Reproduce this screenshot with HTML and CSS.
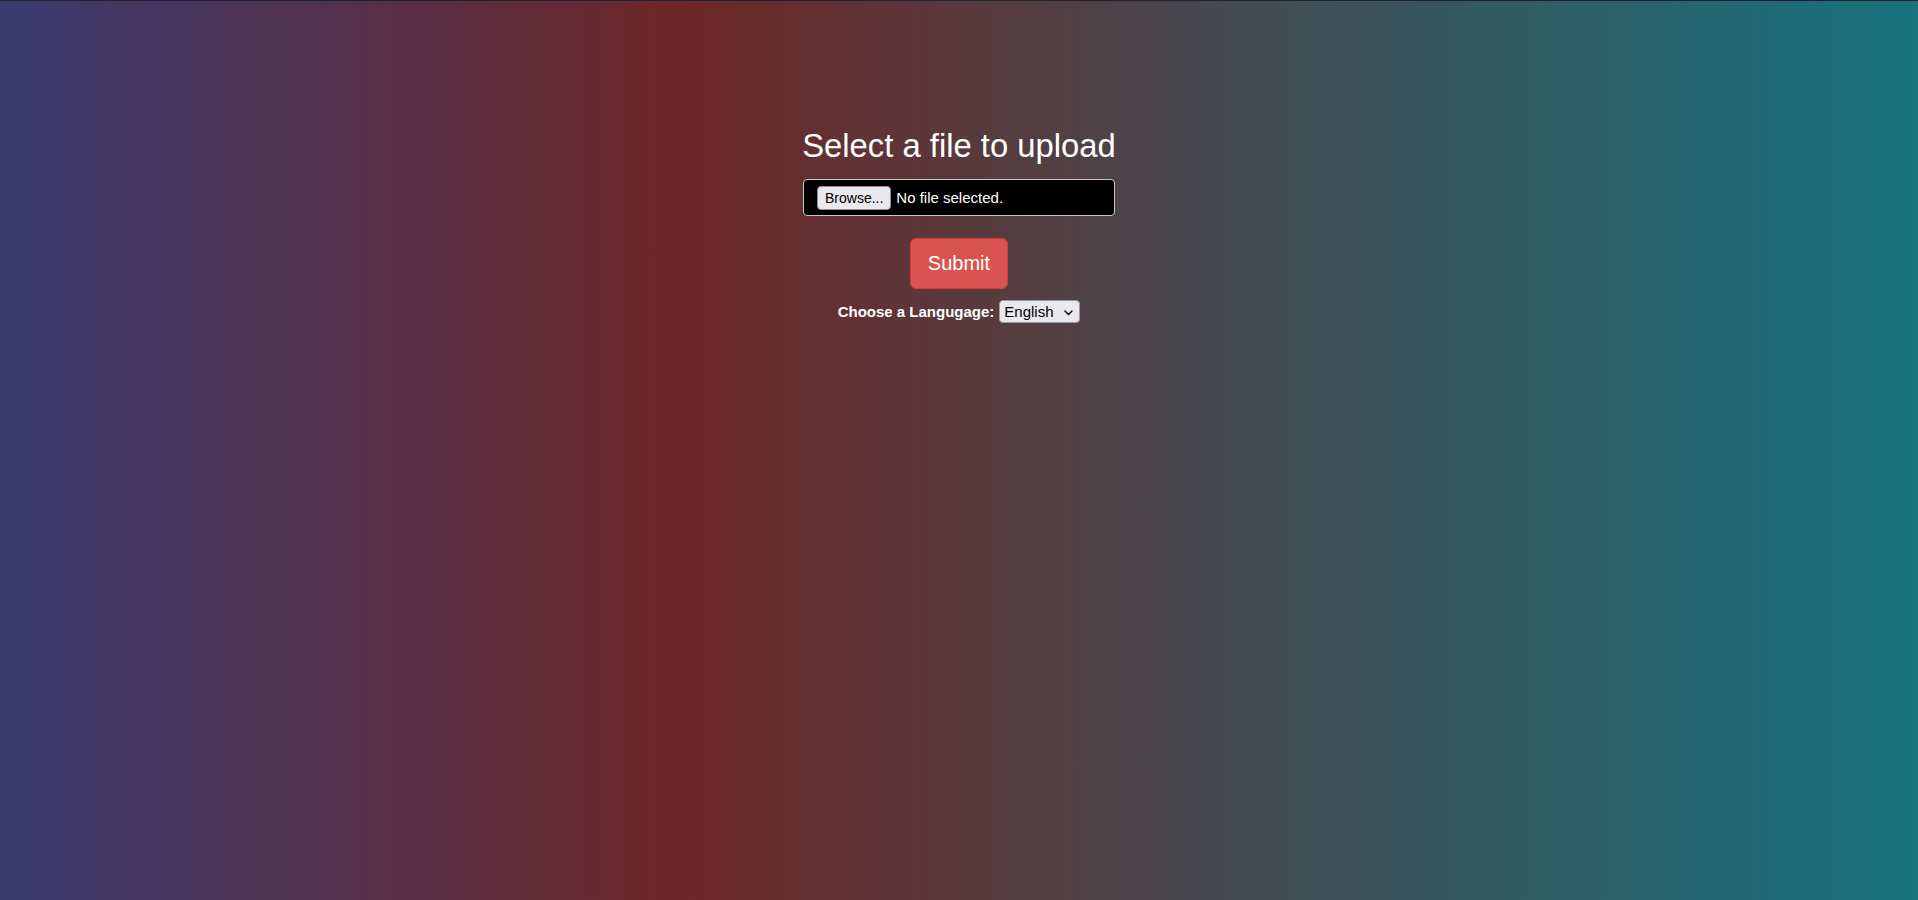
FILE: index.html
```html
<!DOCTYPE html>
<html lang="en">
<head>
<meta charset="utf-8">
<title>Upload</title>
<link rel="stylesheet" href="styles.css">
</head>
<body>
<div class="page">
  <form class="upload">
    <h1 class="title">Select a file to upload</h1>
    <div class="file-box">
      <button type="button" class="browse">Browse...</button>
      <span class="file-name">No file selected.</span>
    </div>
    <button type="submit" class="submit">Submit</button>
    <div class="lang-row">
      <label class="lang-label" for="lang">Choose a Langugage:</label>
      <span class="select-wrap">
        <select id="lang" class="lang-select">
          <option>English</option>
        </select>
        <svg class="chev" width="9" height="6" viewBox="0 0 9 6"><path d="M1 1l3.5 3.5L8 1" fill="none" stroke="#111" stroke-width="1.5" stroke-linecap="round" stroke-linejoin="round"/></svg>
      </span>
    </div>
  </form>
</div>
</body>
</html>
```

FILE: styles.css
```css
html, body {
  margin: 0;
  padding: 0;
  height: 100%;
}
body {
  font-family: "Liberation Sans", Arial, sans-serif;
  font-size: 15px;
  color: #fff;
}
.page {
  min-height: 900px;
  box-sizing: border-box;
  border-top: 1px solid #1d2130;
  background: linear-gradient(to right, #3b3b72 0%, #6e2727 35.5%, #3f4f56 68%, #17737f 100%);
  display: flex;
  justify-content: center;
}
.upload {
  display: flex;
  flex-direction: column;
  align-items: center;
  padding-top: 127px;
}
.title {
  margin: 0;
  font-size: 32.8px;
  font-weight: 400;
  line-height: 36px;
  color: #fff;
}
.file-box {
  margin-top: 15px;
  width: 312px;
  height: 37px;
  box-sizing: border-box;
  background: #000;
  border: 1px solid #c8c8c8;
  border-radius: 4px;
  padding: 0 13px;
  display: flex;
  align-items: center;
  gap: 5px;
}
.browse {
  font-family: "Liberation Sans", Arial, sans-serif;
  font-size: 14px;
  height: 24px;
  padding: 0 7px;
  background: #e9e9ed;
  color: #000;
  border: 1px solid #8f8f9d;
  border-radius: 4px;
  line-height: 22px;
}
.file-name {
  font-size: 15px;
  color: #fff;
}
.submit {
  margin-top: 22px;
  font-family: "Liberation Sans", Arial, sans-serif;
  font-size: 20px;
  line-height: 29px;
  padding: 10px 17px;
  background: #d9534f;
  color: #fff;
  border: 1px solid #c9403c;
  border-radius: 6px;
}
.lang-row {
  margin-top: 11px;
  display: flex;
  align-items: center;
  gap: 5px;
}
.lang-label {
  font-weight: 700;
  font-size: 15px;
}
.select-wrap {
  position: relative;
  display: inline-block;
}
.lang-select {
  appearance: none;
  -webkit-appearance: none;
  font-family: "Liberation Sans", Arial, sans-serif;
  font-size: 15px;
  height: 23px;
  width: 81px;
  box-sizing: border-box;
  padding: 0 20px 0 4px;
  background: #e9e9ed;
  color: #000;
  border: 1px solid #9a9aa6;
  border-radius: 4px;
}
.chev {
  position: absolute;
  right: 7px;
  top: 10px;
  pointer-events: none;
}
```
